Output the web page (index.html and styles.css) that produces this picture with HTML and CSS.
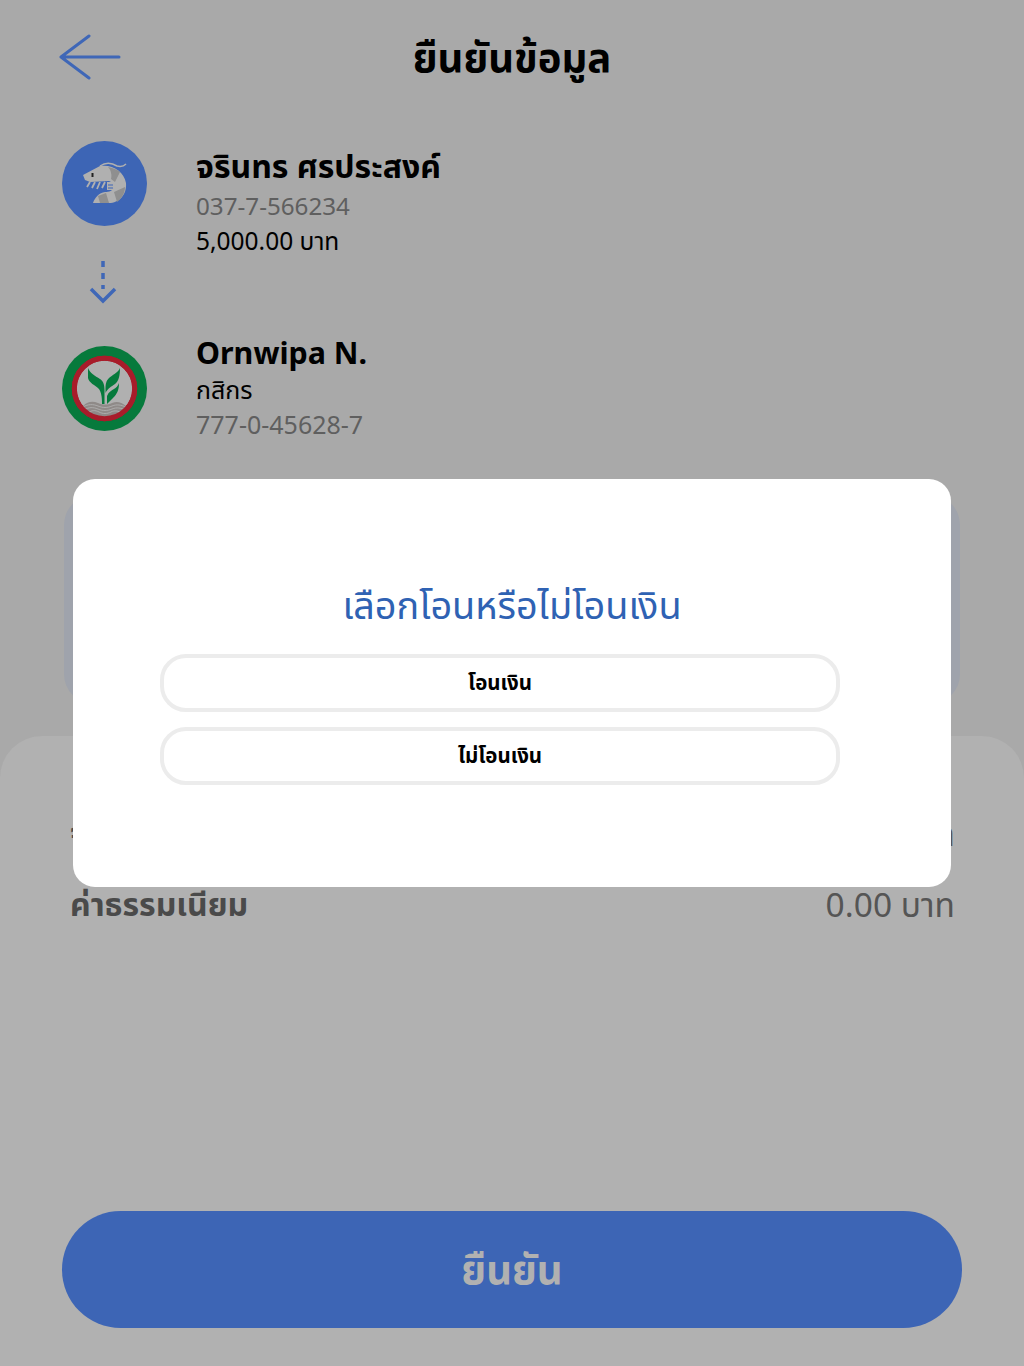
FILE: index.html
```html
<!DOCTYPE html>
<html lang="th">
<head>
<meta charset="utf-8">
<title>ยืนยันข้อมูล</title>
<link rel="stylesheet" href="styles.css">
</head>
<body>
<div class="page">
  <header class="header">
    <svg class="back" viewBox="0 0 62 46" width="62" height="46"><path d="M30 2 2 23l28 21M2 23h58" fill="none" stroke="#3f67b7" stroke-width="3" stroke-linecap="round" stroke-linejoin="round"/></svg>
    <h1 class="title">ยืนยันข้อมูล</h1>
  </header>
  <section class="party party-from">
    <svg class="avatar" viewBox="0 0 85 85" width="85" height="85">
      <circle cx="42.500" cy="42.500" r="42.500" fill="#3d65b5"/>
      <path d="M21 34 38 25C50 23 62 30 64 42 65 54 57 62 47 62H31C33 56 37 52 43 51 47 51 51 50 52 46 52 43 50 41 47 40L28 41 23 39Z" fill="#b0b0b0"/>
      <path d="M46 26C52 27 56 29 58 31L53 41 49 38C50 34 49 29 46 26ZM63 46 52 51 55 61C59 58 63 53 63 46ZM44 52 47 62H38L36 55Z" fill="#8f8f8f"/>
      <path d="M38 25C44 21 50 22 55 25 59 26 62 25 64 23" fill="none" stroke="#b0b0b0" stroke-width="1.500"/>
      <path d="M28 41l-3 5M33 41l-3 6M38 41l-3 7M43 41l-3 6" stroke="#b0b0b0" stroke-width="1.800"/>
      <path d="M45 41h6c2 2 2 6 0 8h-6Z" fill="#b0b0b0"/>
      <path d="M46 44h5M46 47h5" stroke="#3d65b5" stroke-width="1.200"/>
      <rect x="29.500" y="32" width="2" height="4" fill="#222"/>
    </svg>
    <div class="info">
      <div class="name">จรินทร ศรประสงค์</div>
      <div class="sub muted account">037-7-566234</div>
      <div class="sub">5,000.00 บาท</div>
    </div>
  </section>
  <svg class="flow-arrow" viewBox="0 0 30 46" width="30" height="46"><path d="M15 2v28" stroke="#3f67b7" stroke-width="3.500" stroke-dasharray="6 6" fill="none"/><path d="M3 30 15 42 27 30" fill="none" stroke="#3f67b7" stroke-width="3.500"/></svg>
  <section class="party party-to">
    <svg class="avatar" viewBox="0 0 85 85" width="85" height="85">
      <circle cx="42.500" cy="42.500" r="42.500" fill="#067a3c"/>
      <circle cx="42.500" cy="42.500" r="30.200" fill="#b0b0b0" stroke="#a81c2a" stroke-width="5"/>
      <path d="M26 22V32C27 37 33 39 37 43 39 46 40 50 40 58H42.500V44C42.500 38 41 35 38 33 33 30 28 27 26 22Z" fill="#067a3c"/>
      <path d="M58 22C56 27 50 29 47 32 44 35 43.500 38 43.500 44V47C46 42 49 41 53 38 57 35 58 29 58 22Z" fill="#067a3c"/>
      <path d="M45 58V50C46.500 46 50 44 52 43 54 42 56 40 57 37 57 44 55 48 51 52 49 54 47 56 45 58Z" fill="#067a3c"/>
      <path d="M21 60C26 55 31 55 36 57 41 59 45 59 50 57 55 55 59 56 64 60L62 65C58 69 50 71 42.500 71 35 71 27 69 23 65Z" fill="#8f8a88"/>
      <path d="M21 61C26 58 31 58 36 60 41 62 45 62 50 60 55 58 59 59 64 61M22 64C27 61 31 61 36 63 41 65 45 65 50 63 55 61 59 62 63 64M26 67C30 64 33 64 37 66 41 68 45 68 49 66 53 64 56 65 60 67" stroke="#b4b4b4" stroke-width=".8" fill="none"/>
      <circle cx="42.500" cy="42.500" r="30.200" fill="none" stroke="#a81c2a" stroke-width="5"/>
    </svg>
    <div class="info">
      <div class="name name-latin">Ornwipa N.</div>
      <div class="sub bank">กสิกร</div>
      <div class="sub muted acct-to">777-0-45628-7</div>
    </div>
  </section>
  <div class="note-card"></div>
  <section class="sheet">
    <div class="row row-amount"><span class="label">จำนวนเงิน</span><span class="value">5,000.00 บาท</span></div>
    <div class="row row-fee"><span class="label">ค่าธรรมเนียม</span><span class="value">0.00 บาท</span></div>
    <button class="confirm" type="button">ยืนยัน</button>
  </section>
</div>
<div class="dialog">
  <h2 class="dialog-title">เลือกโอนหรือไม่โอนเงิน</h2>
  <button class="choice" type="button">โอนเงิน</button>
  <button class="choice" type="button">ไม่โอนเงิน</button>
</div>
</body>
</html>
```

FILE: styles.css
```css
* { box-sizing: border-box; }
html, body { margin: 0; padding: 0; }
body {
  width: 1024px;
  height: 1366px;
  overflow: hidden;
  position: relative;
  background: #a9a9a9;
  font-family: "Noto Sans", "Noto Sans Thai", "Open Sans", sans-serif;
  color: #000;
}
.page { height: 1366px; display: flex; flex-direction: column; }
.header {
  height: 118px;
  flex: none;
  position: relative;
  display: flex;
  justify-content: center;
  align-items: flex-start;
  padding-top: 33px;
}
.back { position: absolute; left: 59px; top: 34px; }
.title { margin: 0; font-size: 40px; font-weight: 700; line-height: 48px; }
.party { display: flex; gap: 49px; padding-left: 62px; flex: none; }
.party-from { margin-top: 23px; height: 118px; }
.party-to { margin-top: 41px; height: 110px; }
.avatar { flex: none; }
.info { display: flex; flex-direction: column; }
.name { font-size: 32px; font-weight: 700; line-height: 40px; margin-top: 5px; }
.name-latin { margin-top: -13px; font-size: 30.400px; }
.sub { font-size: 24.500px; line-height: 34px; }
.account { margin: 3px 0 1px; font-size: 24.200px; }
.bank { margin-top: -1px; margin-bottom: 1px; font-size: 25px; }
.acct-to { font-size: 25px; }
.muted { color: #5f5f5f; }
.flow-arrow { margin: 0 0 0 88px; flex: none; }
.note-card {
  flex: none;
  margin: 39px 64px 0;
  height: 209px;
  border-radius: 30px;
  background: #9fa3ac;
}
.sheet {
  flex: 1;
  margin-top: 32px;
  background: #b1b1b1;
  border-radius: 42px 42px 0 0;
  padding: 0 62px 38px;
  display: flex;
  flex-direction: column;
}
.row {
  display: flex;
  justify-content: space-between;
  padding: 0 7px 0 8px;
  font-size: 33.500px;
  line-height: 44px;
  color: #555;
}
.row-amount { margin-top: 75px; }
.row-fee { margin-top: 27px; }
.label { font-weight: 700; color: #4a4a4a; font-size: 32px; }
.confirm {
  margin-top: auto;
  height: 117px;
  border: 0;
  border-radius: 59px;
  background: #3d65b5;
  color: #b1b1b1;
  font-family: inherit;
  font-size: 40px;
  font-weight: 700;
  padding: 4px 0 0;
}
.dialog {
  position: absolute;
  left: 73px;
  top: 479px;
  width: 878px;
  height: 408px;
  background: #fff;
  border-radius: 22px;
  padding: 99px 111px 0 87px;
  display: flex;
  flex-direction: column;
}
.dialog-title {
  margin: 0 -24px 22px 0;
  text-align: center;
  font-size: 37.800px;
  font-weight: 400;
  line-height: 54px;
  color: #2f62b3;
}
.choice {
  height: 58px;
  margin-bottom: 15px;
  border: 4px solid #ececec;
  border-radius: 26px;
  background: #fff;
  color: #000;
  font-family: inherit;
  font-size: 20.500px;
  font-weight: 700;
  padding: 0;
}
```
